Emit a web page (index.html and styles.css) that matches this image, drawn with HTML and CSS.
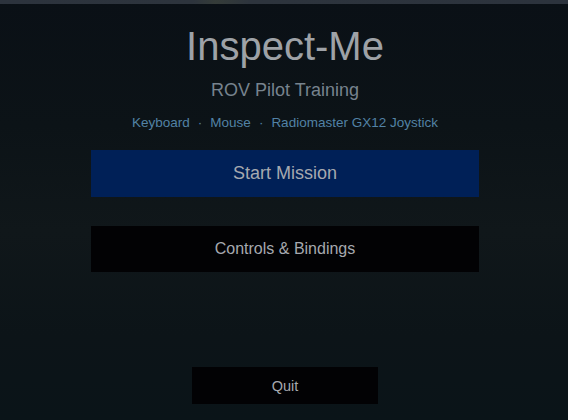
FILE: index.html
```html
<!DOCTYPE html>
<html>
<head>
<meta charset="utf-8">
<link rel="stylesheet" href="styles.css">
</head>
<body>
<div class="topbar"></div>
<main class="menu">
  <h1 class="title">Inspect-Me</h1>
  <p class="subtitle">ROV Pilot Training</p>
  <div class="inputs">
    <span>Keyboard</span><span class="sep">·</span><span>Mouse</span><span class="sep">·</span><span>Radiomaster GX12 Joystick</span>
  </div>
  <button class="btn btn-primary">Start Mission</button>
  <button class="btn btn-dark">Controls &amp; Bindings</button>
  <button class="btn btn-quit">Quit</button>
</main>
</body>
</html>
```
FILE: styles.css
```css
html, body {
  margin: 0;
  padding: 0;
  width: 568px;
  height: 420px;
  overflow: hidden;
}
body {
  font-family: "Liberation Sans", Arial, sans-serif;
  background: linear-gradient(180deg, #0a1016 0%, #0c1317 30%, #10171a 55%, #0c1418 80%, #0a1418 100%);
}
.topbar {
  height: 4px;
  background: linear-gradient(90deg, #2c333d 0%, #2d343d 34%, #353c39 38%, #2d343d 44%, #2c333d 100%);
}
.menu {
  display: flex;
  flex-direction: column;
  align-items: center;
  padding: 19px 0 0 2px;
}
.title {
  margin: 0;
  font-weight: normal;
  font-size: 40px;
  line-height: 46px;
  color: #9ea2a7;
}
.subtitle {
  margin: 11px 0 0;
  font-size: 18px;
  line-height: 21px;
  color: #77838e;
}
.inputs {
  margin-top: 14px;
  display: flex;
  gap: 8px;
  font-size: 13.5px;
  line-height: 15px;
  color: #5282a5;
}
.btn {
  border: none;
  font-family: inherit;
  color: #a6a9af;
  display: flex;
  align-items: center;
  justify-content: center;
  padding: 0;
}
.btn-primary {
  margin-top: 20px;
  width: 388px;
  height: 47px;
  background: #002057;
  font-size: 18px;
}
.btn-dark {
  margin-top: 29px;
  width: 388px;
  height: 46px;
  background: #020204;
  font-size: 16px;
}
.btn-quit {
  margin-top: 95px;
  width: 186px;
  height: 37px;
  background: #020204;
  font-size: 14.5px;
}
```
